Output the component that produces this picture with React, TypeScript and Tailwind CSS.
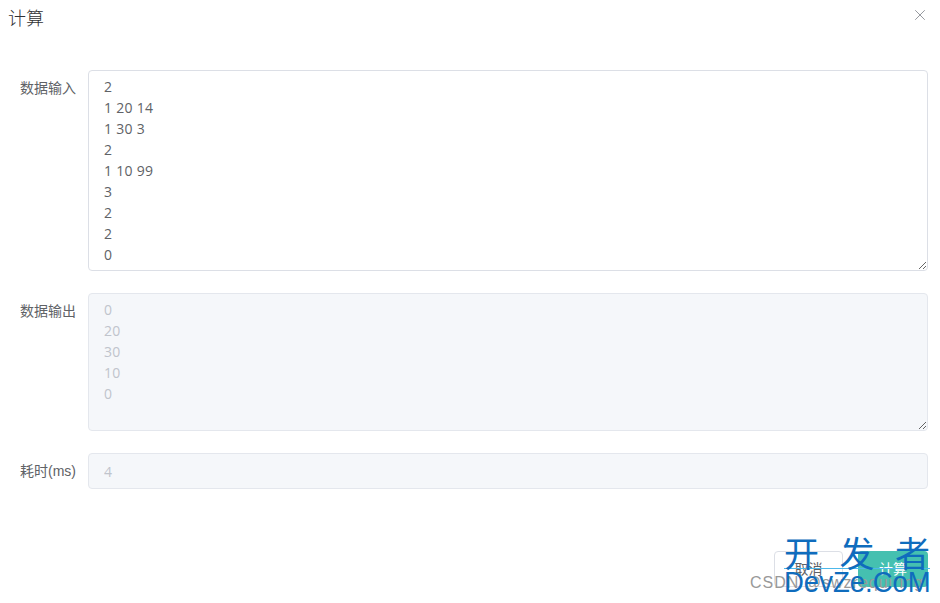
import { X } from "lucide-react";

const fontStack = "font-['Open_Sans','Noto_Sans_CJK_SC',sans-serif]";

const App = () => {
  return (
    <div className={`relative w-[940px] h-[603px] overflow-hidden bg-white ${fontStack}`}>
      {/* Header */}
      <div className="flex items-start justify-between h-[70px] pl-2 pr-[11px] pt-[5px]">
        <span className="text-[18px] leading-[26px] font-light text-[#303133]">计算</span>
        <X className="w-[18px] h-[18px] mt-px text-[#909399]" strokeWidth={1.25} />
      </div>

      {/* Form */}
      <div className="flex flex-col gap-[22px] pr-3">
        <div className="flex">
          <label className="w-[88px] pr-3 pt-[7px] text-right text-[14px] leading-[21px] text-[#606266] whitespace-nowrap">数据输入</label>
          <textarea
            readOnly
            rows={9}
            defaultValue={"2\n1 20 14\n1 30 3\n2\n1 10 99\n3\n2\n2\n0"}
            className="flex-1 h-[201px] px-[15px] py-[5px] text-[14px] leading-[21px] tracking-[0.3px] text-[#606266] bg-white border border-[#dcdfe6] rounded-[4px] outline-none resize-y"
          />
        </div>

        <div className="flex">
          <label className="w-[88px] pr-3 pt-[7px] text-right text-[14px] leading-[21px] text-[#606266] whitespace-nowrap">数据输出</label>
          <textarea
            disabled
            rows={6}
            defaultValue={"0\n20\n30\n10\n0"}
            className="flex-1 h-[138px] px-[15px] py-[5px] text-[14px] leading-[21px] tracking-[0.3px] text-[#c0c4cc] bg-[#f5f7fa] border border-[#e4e7ed] rounded-[4px] outline-none resize-y"
          />
        </div>

        <div className="flex items-center">
          <label className="w-[88px] pr-3 text-right text-[14px] leading-[21px] text-[#606266] whitespace-nowrap">
            耗时<span className="font-['Liberation_Sans',sans-serif]">(ms)</span>
          </label>
          <input
            disabled
            defaultValue="4"
            className="flex-1 h-9 px-[15px] text-[14px] text-[#c0c4cc] bg-[#f5f7fa] border border-[#e4e7ed] rounded-[4px] outline-none"
          />
        </div>
      </div>

      {/* Footer */}
      <div className="flex justify-end gap-[15px] mt-[62px] pr-3">
        <button className="w-[69px] h-9 pb-[2px] text-[14px] text-[#606266] bg-white border border-[#dcdfe6] rounded-[4px]">取消</button>
        <button className="w-[70px] h-9 pb-[2px] text-[14px] text-white bg-[#45c0b0] rounded-[4px]">计算</button>
      </div>

      {/* Watermark */}
      <div className="absolute left-[750px] top-[574px] font-['Liberation_Sans',sans-serif] text-[16px] leading-[18px] tracking-[1px] text-[#999999] whitespace-nowrap">
        CSDN @swzrequiring
      </div>
      <div className="absolute left-[784px] top-[535px] w-[146px]">
        <div className="flex justify-between w-full text-[35px] leading-[33px] text-[#0f6cbd] font-['Noto_Sans_CJK_SC',sans-serif]">
          <span>开</span>
          <span>发</span>
          <span>者</span>
        </div>
        <div className="w-full h-px bg-[#4db8ea]" />
        <div className="origin-top scale-y-110 text-[27.5px] leading-[24px] text-[#0f6cbd] font-['Liberation_Sans',sans-serif] whitespace-nowrap">
          DevZe.CoM
        </div>
      </div>
    </div>
  );
};

export default App;
